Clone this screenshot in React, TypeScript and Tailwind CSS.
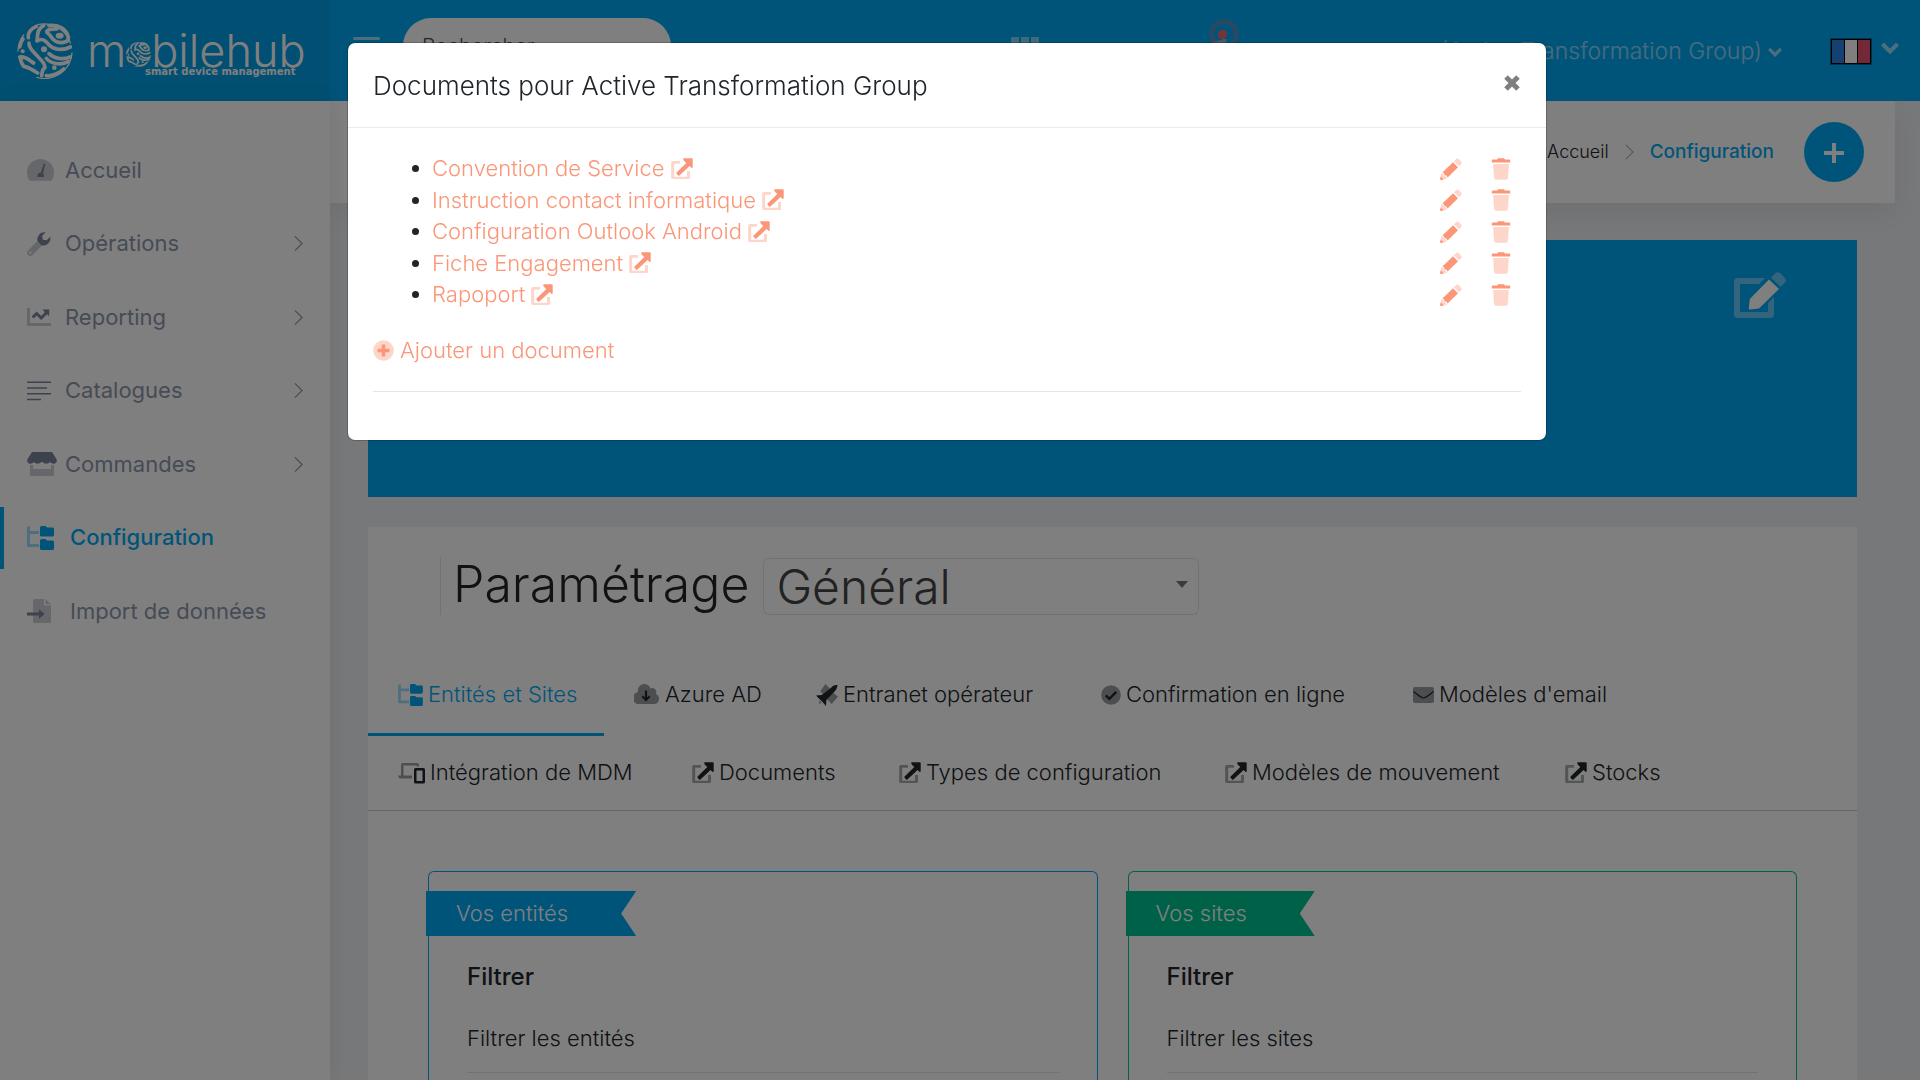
import React from "react";

type IconProps = { className?: string };

function ExternalIcon({ className = "" }: IconProps) {
  return (
    <svg viewBox="0 0 22 22" className={className} fill="currentColor" aria-hidden="true">
      <path
        opacity=".4"
        d="M2 3h7v2.700H3.200v13h12.800v-5.700H19V19.500a1.500 1.500 0 0 1-1.500 1.500H1.700A1.500 1.500 0 0 1 .2 19.500V4.500A1.500 1.500 0 0 1 1.700 3z"
      />
      <path d="M12.600.2h8.200a.9.900 0 0 1 .9.900v7.800c0 .9-1 1.300-1.600.7l-1.500-1.500-10.200 9.300a.9.900 0 0 1-1.300 0l-1.500-1.600a.9.900 0 0 1 0-1.300L15.300 5.100l-2.200-2.200c-1-1-1-2.700-.5-2.700z" />
    </svg>
  );
}

function PencilIcon({ className = "" }: IconProps) {
  return (
    <svg viewBox="0 0 22 22" className={className} fill="currentColor" aria-hidden="true">
      <path opacity=".4" d="M16 1.200a2 2 0 0 1 2.800 0L21 3.400a2 2 0 0 1 0 2.800l-2.100 2-5-5zM1.300 15.200L.2 20.500a1 1 0 0 0 1.300 1.300l5.400-1-1-2.600-2-.2-.4-2z" />
      <path d="M13 4.200l5 5L7.600 19.600l-1.200-2.200-2-.2-.3-2-1.700-.6zM.8 18.400l2.900 2.900-2.500.6a.8.800 0 0 1-1-1z" />
    </svg>
  );
}

function TrashIcon({ className = "" }: IconProps) {
  return (
    <svg viewBox="0 0 20 22" className={className} fill="currentColor" aria-hidden="true">
      <path opacity=".4" d="M2.100 6h15.800l-1 14a2 2 0 0 1-2 1.800H5.100a2 2 0 0 1-2-1.800z" />
      <path d="M7 .3h6l.9 1.300h4.500a.8.800 0 0 1 .8.800v2H.8v-2a.8.800 0 0 1 .8-.8h4.500z" />
    </svg>
  );
}

function PlusCircleIcon({ className = "" }: IconProps) {
  return (
    <svg viewBox="0 0 21 21" className={className} fill="currentColor" aria-hidden="true">
      <circle opacity=".4" cx="10.500" cy="10.500" r="10.300" />
      <path d="M8.800 4.500h3.400v4.300h4.300v3.400h-4.300v4.300H8.800v-4.300H4.500V8.800h4.300z" />
    </svg>
  );
}

function TreeIcon({ className = "" }: IconProps) {
  return (
    <svg viewBox="0 0 27 24" className={className} fill="currentColor" aria-hidden="true">
      <path opacity=".4" d="M0 .5h3v4.500h9v3H3v10h9v3H1.500A1.500 1.500 0 0 1 0 19.500z" />
      <path d="M14.500 0h4l1.500 1.500h5.500A1.500 1.500 0 0 1 27 3v6a1.500 1.500 0 0 1-1.500 1.500h-11A1.500 1.500 0 0 1 13 9V1.500A1.500 1.500 0 0 1 14.500 0zM14.500 13h4l1.500 1.500h5.500A1.500 1.500 0 0 1 27 16v6.500a1.500 1.500 0 0 1-1.500 1.500h-11a1.500 1.500 0 0 1-1.500-1.500v-8a1.500 1.500 0 0 1 1.500-1.500z" />
    </svg>
  );
}

function GaugeIcon({ className = "" }: IconProps) {
  return (
    <svg viewBox="0 0 27 22" className={className} fill="currentColor" aria-hidden="true">
      <path opacity=".4" d="M13.500 0A13.500 13.500 0 0 0 1.600 20c.5 1 1 1.800 2 1.800h19.800c1 0 1.500-.8 2-1.800A13.500 13.500 0 0 0 13.500 0z" />
      <path d="M16.700 4.600l1.500.4-2.100 9.600a3 3 0 0 1 .6 3.400H10.600a3 3 0 0 1 3.300-4.200z" />
    </svg>
  );
}

function WrenchIcon({ className = "" }: IconProps) {
  return (
    <svg viewBox="0 0 24 24" className={className} fill="currentColor" aria-hidden="true">
      <path opacity=".4" fillRule="evenodd" d="M10.500 9l4.500 4.500-9.400 9.400a3.200 3.200 0 0 1-4.600-4.500zM3.200 19.500a1.200 1.200 0 1 0 .1 2.400 1.200 1.200 0 0 0-.1-2.400z" />
      <path d="M18.700.3l-3.500 3.500.6 3.900 3.900.6 3.500-3.500a7 7 0 0 1-8.800 8.400l-3.600-3.600A7 7 0 0 1 18.700.3z" />
    </svg>
  );
}

function ChartIcon({ className = "" }: IconProps) {
  return (
    <svg viewBox="0 0 24 24" className={className} fill="currentColor" aria-hidden="true">
      <path opacity=".4" d="M0 3h3v15h21v3H1.500A1.500 1.500 0 0 1 0 19.500z" />
      <path d="M15.500 4.500h6.700v6.800l-2.200-2.100-5.800 5.700-4.600-4.500-3 3-2-2 5-5 4.600 4.500 3.600-3.600z" />
    </svg>
  );
}

function ListIcon({ className = "" }: IconProps) {
  return (
    <svg viewBox="0 0 24 24" className={className} fill="currentColor" aria-hidden="true">
      <path d="M0 2.500h24v1.500H0zM0 8.300h20v1.500H0zM0 14h24v1.500H0zM0 19.700h14v1.500H0z" />
    </svg>
  );
}

function StoreIcon({ className = "" }: IconProps) {
  return (
    <svg viewBox="0 0 30 24" className={className} fill="currentColor" aria-hidden="true">
      <path opacity=".4" d="M3 13h3v4h18v-4h3v9.500a1.500 1.500 0 0 1-1.500 1.500h-21A1.500 1.500 0 0 1 3 22.500z" />
      <path d="M5 0h20l4.400 7c1.200 2-.2 4.800-2.600 4.800-1.600 0-2.700-.6-3.700-1.700-2 2.200-5.700 2.200-7.600 0h-1c-2 2.200-5.600 2.200-7.600 0C5.900 11.200 4.800 11.800 3.200 11.800.800 11.800-.600 9 .600 7z" />
    </svg>
  );
}

function ImportIcon({ className = "" }: IconProps) {
  return (
    <svg viewBox="0 0 24 24" className={className} fill="currentColor" aria-hidden="true">
      <path opacity=".4" d="M6 1.500A1.500 1.500 0 0 1 7.500 0H17v6.500h7v16a1.500 1.500 0 0 1-1.500 1.500h-15A1.500 1.500 0 0 1 6 22.500zM18.500 0l5.500 5.200h-5.500z" />
      <path d="M0 13.500h12v-3.200l5.700 4.700L12 19.700v-3.200H0z" />
    </svg>
  );
}

function CloudIcon({ className = "" }: IconProps) {
  return (
    <svg viewBox="0 0 26 21" className={className} fill="currentColor" aria-hidden="true">
      <path opacity=".45" d="M21.800 9.500A4 4 0 0 0 16.500 4 6.500 6.500 0 0 0 4 7.500a6 6 0 0 0 1.800 12H20a5.200 5.200 0 0 0 1.800-10z" />
      <path d="M10.900 6h2.200v7l2-2 1.300 1.400-4.400 4.600-4.400-4.600L8.900 11l2 2z" />
    </svg>
  );
}

function PlaneIcon({ className = "" }: IconProps) {
  return (
    <svg viewBox="0 0 21 21" className={className} fill="currentColor" aria-hidden="true">
      <path opacity=".45" d="M9 0l5 5-6 6-4-4zM21 12l-5-4-6 6 5 5zM3 15.500l2.500 2.500-2.500 1z" />
      <path d="M14 4c2-2.500 4-3.400 6.500-3-.1 2.500-1 4.500-3 6.500L10 15l-.5 6L6 17l-2-2-4-4 5.500-.5z" />
    </svg>
  );
}

function CheckCircleIcon({ className = "" }: IconProps) {
  return (
    <svg viewBox="0 0 20 20" className={className} aria-hidden="true">
      <circle opacity=".45" cx="10" cy="10" r="9.800" fill="currentColor" />
      <path d="M4.800 10.300l3.600 3.600 6.800-7" fill="none" stroke="currentColor" strokeWidth="2.400" />
    </svg>
  );
}

function MailIcon({ className = "" }: IconProps) {
  return (
    <svg viewBox="0 0 21 20" className={className} aria-hidden="true">
      <rect opacity=".45" y="2" width="21" height="16" rx="2" fill="currentColor" />
      <path d="M.5 6.500c4 3 7.500 6.500 10 6.500s6-3.500 10-6.500" fill="none" stroke="currentColor" strokeWidth="1.200" />
    </svg>
  );
}

function DevicesIcon({ className = "" }: IconProps) {
  return (
    <svg viewBox="0 0 27 21" className={className} fill="currentColor" aria-hidden="true">
      <path opacity=".45" d="M3 13V2.500A2 2 0 0 1 5 .5h14a2 2 0 0 1 2 2V4h-2.500V3h-13v10H14v3H3a3 3 0 0 1-3-2.500V13z" />
      <path fillRule="evenodd" d="M17.500 5.500h8A1.500 1.500 0 0 1 27 7v12.500a1.500 1.500 0 0 1-1.500 1.500h-8a1.500 1.500 0 0 1-1.500-1.500V7a1.500 1.500 0 0 1 1.500-1.500zM18.500 8v10.500h6V8z" />
    </svg>
  );
}

function EditIcon({ className = "" }: IconProps) {
  return (
    <svg viewBox="0 0 52 46" className={className} fill="#fff" aria-hidden="true">
      <path opacity=".4" d="M4 6h27l-6 6H6v28h28V31l6-6v17a4 4 0 0 1-4 4H4a4 4 0 0 1-4-4V10a4 4 0 0 1 4-4z" />
      <path opacity=".4" d="M41 1.500a4 4 0 0 1 5.500 0l4 4a4 4 0 0 1 0 5.500L46.500 15 37 5.500z" />
      <path d="M35 7.500L45 17 25 36.500l-9 1a1.200 1.200 0 0 1-1.200-1.500l1-9z" />
    </svg>
  );
}

function ChevronDown({ className = "" }: IconProps) {
  return (
    <svg viewBox="0 0 18 12" className={className} fill="none" stroke="#fff" strokeWidth="4" aria-hidden="true">
      <path d="M1.500 2l7.500 7.500L16.500 2" />
    </svg>
  );
}

function ChevronRight({ className = "" }: IconProps) {
  return (
    <svg viewBox="0 0 10 18" className={className} fill="none" stroke="currentColor" strokeWidth="1.300" aria-hidden="true">
      <path d="M1 1l8 8-8 8" />
    </svg>
  );
}

function Globe({ className = "" }: IconProps) {
  return (
    <svg viewBox="0 0 168 168" className={className} fill="none" stroke="#fff" strokeWidth="11" strokeLinecap="round" strokeLinejoin="round" aria-hidden="true">
      <path strokeWidth="4" d="M20 36A81 81 0 0 0 3 84M62 5A82 82 0 0 1 160 60M165 90A82 82 0 0 1 60 163" />
      <path d="M58 10C40 18 32 28 34 44M80 8C60 18 62 34 60 54C76 44 86 52 96 66C110 80 136 84 160 72" />
      <path d="M96 8C128 4 148 20 154 42C156 58 136 62 118 56C104 50 104 40 94 32C88 28 88 24 92 22C100 18 112 18 120 18" />
      <path d="M18 48C12 56 9 64 8 72M36 60C36 78 48 84 60 98C72 112 84 118 84 134C74 140 76 148 74 158" />
      <path d="M8 102C28 98 34 112 50 120M10 102C10 114 14 122 20 130C36 132 44 140 62 150" />
      <path d="M96 92C110 106 136 112 160 102M88 106C102 122 132 128 154 116M88 158C104 160 128 152 140 138" />
      <g fill="#fff" stroke="none">
        <ellipse cx="128" cy="38" rx="12" ry="9" />
        <circle cx="81" cy="79" r="9" />
        <circle cx="17" cy="85" r="6" />
        <circle cx="112" cy="134" r="7" />
      </g>
    </svg>
  );
}

const menu = [
  { label: "Accueil", Icon: GaugeIcon, size: "w-[27px] h-[22px]" },
  { label: "Opérations", Icon: WrenchIcon, size: "w-6 h-6", arrow: true },
  { label: "Reporting", Icon: ChartIcon, size: "w-6 h-6", arrow: true },
  { label: "Catalogues", Icon: ListIcon, size: "w-6 h-6", arrow: true },
  { label: "Commandes", Icon: StoreIcon, size: "w-[30px] h-6", arrow: true },
  { label: "Configuration", Icon: TreeIcon, size: "w-[27px] h-6", active: true, wide: true },
  { label: "Import de données", Icon: ImportIcon, size: "w-6 h-6", wide: true },
];

const tabRows = [
  [
    { label: "Entités et Sites", Icon: TreeIcon, size: "w-[25px]", width: "w-[236px]", active: true },
    { label: "Azure AD", Icon: CloudIcon, size: "w-[26px]", width: "w-[182px]" },
    { label: "Entranet opérateur", Icon: PlaneIcon, size: "w-[22px]", width: "w-[285px]" },
    { label: "Confirmation en ligne", Icon: CheckCircleIcon, size: "w-5", width: "w-[312px]" },
    { label: "Modèles d'email", Icon: MailIcon, size: "w-[21px]", width: "w-[255px]" },
  ],
  [
    { label: "Intégration de MDM", Icon: DevicesIcon, size: "w-[27px]", width: "w-[294px]" },
    { label: "Documents", Icon: ExternalIcon, size: "w-[22px]", width: "w-[207px]" },
    { label: "Types de configuration", Icon: ExternalIcon, size: "w-[22px]", width: "w-[326px]" },
    { label: "Modèles de mouvement", Icon: ExternalIcon, size: "w-[22px]", width: "w-[340px]" },
    { label: "Stocks", Icon: ExternalIcon, size: "w-[22px]", width: "w-[153px]" },
  ],
];

const documents = [
  "Convention de Service",
  "Instruction contact informatique",
  "Configuration Outlook Android",
  "Fiche Engagement",
  "Rapoport",
];

function Header() {
  return (
    <header className="flex h-[101px] shrink-0 bg-[#03a9f3] text-white">
      <a href="#" aria-label="mobilehub" className="flex w-[330px] shrink-0 items-center gap-[14px] bg-black/5 pl-[17px]">
        <Globe className="size-14 shrink-0" />
        <span className="relative flex items-center text-[45px] leading-[52px] font-light">
          m<Globe className="mt-2 size-[25px]" />bilehub
          <span className="absolute top-[41px] left-[58px] text-[10px] leading-3 font-bold whitespace-nowrap" style={{ fontFamily: '"DejaVu Sans", sans-serif' }}>
            smart device management
          </span>
        </span>
      </a>
      <div className="flex min-w-0 flex-1 items-start pl-[23px]">
        <button type="button" aria-label="Menu" className="mt-[37px] flex w-[27px] flex-col gap-[9px] opacity-60">
          <span className="h-[3px] rounded bg-white" />
          <span className="h-[3px] rounded bg-white" />
          <span className="h-[3px] rounded bg-white" />
        </button>
        <input
          type="text"
          aria-label="Rechercher"
          placeholder="Rechercher"
          className="mt-[18px] ml-[23px] h-[56px] w-[268px] rounded-[28px] bg-white px-[19px] text-[21px] font-light placeholder:text-[#4a5157]"
        />
        <button type="button" aria-label="Applications" className="mt-[37px] ml-[340px] grid w-7 grid-cols-3 gap-[2px] opacity-50">
          {[0, 1, 2, 3, 4, 5, 6, 7, 8].map((n) => (
            <span key={n} className="h-2 bg-white" />
          ))}
        </button>
        <button type="button" aria-label="Notifications" className="mt-[19px] ml-[169px]">
          <svg viewBox="0 0 32 44" className="h-11 w-8" aria-hidden="true">
            <path d="M2 24l14-4v14L2 28z" fill="#8fb3c4" />
            <circle cx="16" cy="15" r="12.500" fill="none" stroke="#e46a76" strokeOpacity=".35" strokeWidth="5" />
            <circle cx="14.500" cy="15.500" r="4.700" fill="#e46a76" />
            <path d="M14.500 20h4v16h-4z" fill="#8fb3c4" />
          </svg>
        </button>
        <div className="ml-auto flex h-[103px] items-center pr-[21px]">
          <button type="button" className="flex items-center gap-[6px] text-[23px] font-light text-white/55">
            (Active Transformation Group)
            <ChevronDown className="h-[10px] w-[14px] opacity-60" />
          </button>
          <button type="button" aria-label="Français" className="ml-[49px] flex items-center gap-[10px]">
            <span className="grid h-[25px] w-10 grid-cols-3 gap-px border border-black bg-black outline outline-black/40">
              <span className="bg-[#2a82e4]" />
              <span className="bg-white" />
              <span className="bg-[#e4506e]" />
            </span>
            <ChevronDown className="mb-2 h-3 w-[18px] opacity-60" />
          </button>
        </div>
      </div>
    </header>
  );
}

function Sidebar() {
  return (
    <nav className="relative w-[330px] shrink-0 bg-white pt-[38px] shadow-[1px_0_20px_rgba(0,0,0,0.08)]">
      <ul className="flex h-[503px] flex-col justify-between">
        {menu.map(({ label, Icon, size, arrow, active, wide }) => (
          <li key={label}>
            <a
              href="#"
              className={`flex h-[62px] items-center border-l-4 pr-[27px] pl-[23px] text-[22px] ${
                active ? "border-[#03a9f3] font-medium text-[#03a9f3]" : "border-transparent text-[#8d97ad]"
              }`}
            >
              <span className={`shrink-0 ${wide ? "w-[43px]" : "w-[38px]"} ${active ? "" : "text-[#7a849b]"}`}>
                <Icon className={size} />
              </span>
              {label}
              {arrow && <ChevronRight className="ml-auto h-[17px] w-[9px]" />}
            </a>
          </li>
        ))}
      </ul>
    </nav>
  );
}

function FilterCard({ title, sub, border, ribbon }: { title: string; sub: string; border: string; ribbon: string }) {
  return (
    <section className={`min-h-[260px] rounded-t-md border border-b-0 pt-[19px] ${border}`}>
      <div
        className={`-ml-[3px] inline-block h-[45px] pr-[68px] pl-[30px] text-[22px] leading-[45px] font-light text-white [clip-path:polygon(0_0,100%_0,calc(100%-15px)_50%,100%_100%,0_100%)] ${ribbon}`}
      >
        {title}
      </div>
      <div className="px-[38px]">
        <h4 className="mt-[23px] text-2xl leading-9 font-medium">Filtrer</h4>
        <p className="mt-[27px] text-[22px] leading-8 font-light">{sub}</p>
        <hr className="mt-[18px] border-black/10" />
      </div>
    </section>
  );
}

function Main() {
  return (
    <main className="min-w-0 flex-1 pr-[25px]">
      <div className="flex h-[102px] items-center justify-end bg-white pr-[31px] text-lg font-light shadow-[0_10px_30px_rgba(0,0,0,0.08)]">
        <a href="#">Accueil</a>
        <ChevronRight className="mx-4 h-4 w-[9px] text-[#a6b7bf]" />
        <a href="#" className="text-[19px] font-medium text-[#03a9f3]">Configuration</a>
        <button type="button" aria-label="Ajouter" className="ml-[30px] flex size-[60px] items-center justify-center rounded-full bg-[#03a9f3] pt-[2px]">
          <svg viewBox="0 0 20 20" className="size-5" stroke="#fff" strokeWidth="4" aria-hidden="true">
            <path d="M10 0v20M0 10h20" />
          </svg>
        </button>
      </div>
      <div className="mx-[38px] mt-[37px] flex h-[257px] justify-end bg-[#03a9f3] pt-8 pr-[71px]">
        <button type="button" aria-label="Modifier" className="self-start">
          <EditIcon className="h-[46px] w-[52px]" />
        </button>
      </div>
      <div className="mx-[38px] mt-[30px] min-h-[600px] bg-white">
        <div className="flex items-start pt-[30px] pl-[72px]">
          <label htmlFor="scope" className="border-l border-black/10 pr-3 pb-1 pl-3 text-[50px] leading-[54px] font-light">
            Paramétrage
          </label>
          <span className="relative ml-[2px]">
            <select
              id="scope"
              className="mt-px h-[57px] w-[436px] appearance-none rounded-md border border-black/10 bg-white px-3 text-5xl font-light text-[#444]"
            >
              <option>Général</option>
            </select>
            <span className="pointer-events-none absolute top-6 right-[11px] border-x-6 border-t-7 border-x-transparent border-t-[#777]" />
          </span>
        </div>
        <div role="tablist" className="mt-[39px] border-b border-black/20">
          {tabRows.map((row, r) => (
            <div key={r} className="flex">
              {row.map(({ label, Icon, size, width, active }) => (
                <button
                  key={label}
                  type="button"
                  role="tab"
                  aria-selected={!!active}
                  className={`flex items-center gap-[5px] border-b-3 pt-[2px] pl-[30px] text-[22px] font-light whitespace-nowrap ${width} ${
                    r === 0 ? "h-[82px]" : "h-[74px]"
                  } ${active ? "border-[#03a9f3] text-[#03a9f3]" : "border-transparent"}`}
                >
                  <Icon className={`h-[22px] shrink-0 ${size}`} />
                  {label}
                </button>
              ))}
            </div>
          ))}
        </div>
        <div className="grid grid-cols-2 gap-[30px] px-[60px] pt-[60px]">
          <FilterCard title="Vos entités" sub="Filtrer les entités" border="border-[#03a9f3]" ribbon="bg-[#03a9f3]" />
          <FilterCard title="Vos sites" sub="Filtrer les sites" border="border-[#00c292]" ribbon="bg-[#00c292]" />
        </div>
      </div>
    </main>
  );
}

function DocumentsModal() {
  return (
    <div className="fixed inset-0 bg-black/50 pr-[26px]">
      <div
        role="dialog"
        aria-modal="true"
        aria-labelledby="modal-title"
        className="mx-auto mt-[42px] max-w-[1200px] rounded-lg border border-black/20 bg-white bg-clip-padding"
      >
        <div className="flex items-start justify-between border-b border-[#e9ecef] px-[25px] pt-[23px] pb-[21px]">
          <h5 id="modal-title" className="text-[26px] leading-10 font-light">Documents pour Active Transformation Group</h5>
          <button type="button" aria-label="Fermer" className="mt-[9px] mr-px">
            <svg viewBox="0 0 16 16" className="size-4" stroke="#7f7f7f" strokeWidth="5" aria-hidden="true">
              <path d="M2 2l12 12M14 2L2 14" />
            </svg>
          </button>
        </div>
        <div className="px-[25px] pt-[25px] pb-12 text-[#fb9678]">
          <ul className="flex h-[157px] flex-col justify-between">
            {documents.map((name) => (
              <li key={name} className="flex items-center justify-between pr-[10px]">
                <span className="flex items-center before:mr-[13px] before:ml-[39px] before:size-[7px] before:rounded-full before:bg-[#212529]">
                  <a href="#" className="flex items-center gap-[6px] text-[22px] leading-[31px] font-light">
                    {name}
                    <ExternalIcon className="size-[22px]" />
                  </a>
                </span>
                <span className="flex items-center gap-[29px]">
                  <button type="button" aria-label={`Modifier ${name}`}>
                    <PencilIcon className="size-[22px]" />
                  </button>
                  <button type="button" aria-label={`Supprimer ${name}`}>
                    <TrashIcon className="h-[22px] w-5" />
                  </button>
                </span>
              </li>
            ))}
          </ul>
          <a href="#" className="mt-6 inline-flex items-center gap-[6px] text-[22px] leading-8 font-light">
            <PlusCircleIcon className="size-[21px]" />
            Ajouter un document
          </a>
          <hr className="mt-6 border-black/10" />
        </div>
      </div>
    </div>
  );
}

export default function App() {
  return (
    <div className="flex h-screen flex-col overflow-hidden bg-[#edf1f5] text-[#212529]" style={{ fontFamily: "Inter, sans-serif" }}>
      <Header />
      <div className="flex min-h-0 flex-1">
        <Sidebar />
        <Main />
      </div>
      <DocumentsModal />
    </div>
  );
}
